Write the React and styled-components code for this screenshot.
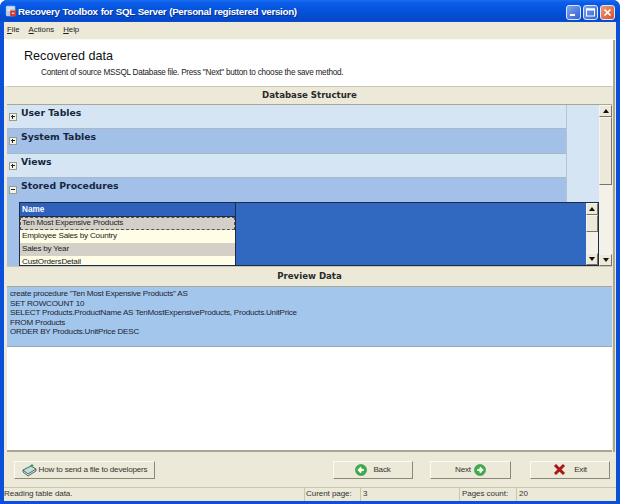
import React from 'react';
import styled, { createGlobalStyle } from 'styled-components';

const Global = createGlobalStyle`
  html, body { margin: 0; padding: 0; background: #fff; }
  body { font-family: "Liberation Sans", Arial, sans-serif; font-size: 8px; color: #222; }
`
const Win = styled.div`
  width: 620px;
  height: 504px;
  box-sizing: border-box;
  display: flex;
  flex-direction: column;
  background: #0a50d8;
  border-radius: 7px 7px 0 0;
  overflow: hidden;
`
const TitleBar = styled.div`
  height: 22px;
  flex: none;
  display: flex;
  align-items: center;
  padding: 0 5px 0 5px;
  background: linear-gradient(#1a6cf0 0, #0a5ce8 3px, #0553dc 10px, #0448c8 20px, #0a50d8 22px);
`
const TitleIcon = styled.svg`
  width: 12px;
  height: 12px;
  margin-right: 1px;
  flex: none;
`
const TitleText = styled.div`
  flex: 1;
  color: #fff;
  font-family: "Liberation Sans", sans-serif;
  font-weight: 700;
  font-size: 9.8px;
  letter-spacing: -0.31px;
  word-spacing: 0.5px;
  white-space: nowrap;
  text-shadow: 1px 1px 0 #0a2f90;
`
const WinBtn = styled.div`
  width: 15px;
  height: 15px;
  box-sizing: border-box;
  margin: 2px 0 0 2px;
  border: 1px solid #dfe8fa;
  border-radius: 3px;
  background: ${p => p.$close ? 'linear-gradient(135deg,#ee9a7a,#d8502a)' : 'linear-gradient(135deg,#7ea4ee,#2f62d8)'};
  display: flex;
  align-items: center;
  justify-content: center;
`
const Client = styled.div`
  flex: 1;
  min-height: 0;
  margin: 0 4px 3px 4px;
  background: #ece9d8;
  display: flex;
  flex-direction: column;
`
const MenuBar = styled.div`
  height: 14px;
  flex: none;
  display: flex;
  gap: 9px;
  align-items: center;
  padding: 0 3px;
  font-size: 7.8px;
  u { text-decoration: underline; }
`
const Sep = styled.div`
  height: 4px;
  flex: none;
  border-bottom: 1px solid #fbfaf5;
  box-sizing: border-box;
`
const Body = styled.div`
  flex: none;
  display: flex;
  flex-direction: column;
  margin-right: 1px;
  border-right: 2px solid #a9a695;
`
const Head = styled.div`
  height: 46px;
  flex: none;
  background: #fff;
  padding: 9px 0 0 20px;
  box-sizing: border-box;
`
const HeadTitle = styled.div`
  font-size: 12.6px;
  color: #111;
  line-height: 15px;
`
const HeadSub = styled.div`
  margin: 3px 0 0 17px;
  font-size: 8.2px;
  letter-spacing: -0.25px;
  line-height: 11px;
`
const Caption = styled.div`
  height: ${p => p.$h}px;
  flex: none;
  box-sizing: border-box;
  margin: 0 1px 0 3px;
  padding-bottom: ${p => p.$pb}px;
  display: flex;
  align-items: center;
  justify-content: center;
  font-family: "DejaVu Sans", sans-serif;
  font-weight: 700;
  font-size: 8.6px;
  color: #2a2a2a;
  background: #ece9d8;
  border-top: 1px solid #c9c6b4;
  border-bottom: 1px solid #a9a695;
`
const Tree = styled.div`
  height: 161px;
  flex: none;
  margin: 0 1px 0 3px;
  display: flex;
  background: #f4f2e8;
  overflow: hidden;
`
const TreeMain = styled.div`
  flex: 1;
  min-width: 0;
  display: flex;
  flex-direction: column;
`
const TopRows = styled.div`
  display: flex;
  background: #d5e5f3;
`
const RowList = styled.div`
  width: 559px;
  flex: none;
  border-right: 1px solid #b4c4d4;
`
const Row = styled.div`
  height: ${p => p.$h}px;
  box-sizing: border-box;
  background: ${p => p.$dark ? '#a3c1e8' : '#d5e5f3'};
  border-bottom: 1px solid #a9b8c8;
  display: flex;
  padding-left: 2px;
`
const Toggle = styled.div`
  width: 8px;
  height: 8px;
  margin: 8px 4px 0 0;
  flex: none;
  box-sizing: border-box;
  border: 1px solid #9a9a8c;
  background: #f4f2e4;
  position: relative;
  &::before {
    content: '';
    position: absolute;
    left: 1px;
    top: 2px;
    width: 4px;
    height: 1px;
    background: #222;
  }
  ${p => p.$plus ? `&::after {
    content: '';
    position: absolute;
    left: 2px;
    top: 1px;
    width: 1px;
    height: 4px;
    background: #222;
  }` : ''}
`
const RowLabel = styled.div`
  font-family: "DejaVu Sans", sans-serif;
  font-weight: 700;
  font-size: 9.3px;
  line-height: 11px;
  margin-top: 2px;
  color: #16263c;
`
const Stored = styled.div`
  flex: 1;
  min-height: 0;
  display: flex;
  flex-direction: column;
`
const StoredTop = styled.div`
  display: flex;
  height: 24px;
  flex: none;
  background: #d5e5f3;
`
const StoredLabel = styled(Row)`
  width: 560px;
  flex: none;
  border-bottom: none;
  border-right: 1px solid #b4c4d4;
`
const StoredBody = styled.div`
  flex: 1;
  min-height: 0;
  background: #a3c1e8;
  padding-left: 12px;
  display: flex;
`
const Sub = styled.div`
  flex: 1;
  display: flex;
  background: #3168c0;
  border: 1px solid #1c2c48;
  min-width: 0;
`
const Grid = styled.div`
  width: 215px;
  flex: none;
  overflow: hidden;
  border-right: 1px solid #1c2c48;
`
const GridHead = styled.div`
  height: 14px;
  box-sizing: border-box;
  background: #2f62bc;
  color: #fff;
  font-weight: 700;
  font-size: 8.2px;
  line-height: 13px;
  padding-left: 2px;
  border-bottom: 1px solid #1c2c48;
`
const GridRow = styled.div`
  height: 13px;
  box-sizing: border-box;
  background: ${p => p.$alt ? '#d4d0c8' : '#fffde6'};
  font-size: 8.1px;
  letter-spacing: -0.2px;
  line-height: 12px;
  padding-left: 2px;
  white-space: nowrap;
  ${p => p.$current ? 'outline: 1px dashed #555; outline-offset: -1px;' : ''}
`
const SubFill = styled.div`
  flex: 1;
`
const ScrollBar = styled.div`
  width: ${p => p.$w}px;
  flex: none;
  display: flex;
  flex-direction: column;
  background: #f4f2e8;
`
const ScrollBtn = styled.div`
  height: ${p => p.$h}px;
  flex: none;
  box-sizing: border-box;
  background: #ece9d8;
  border: 1px solid;
  border-color: #f6f5ec #77756a #77756a #f6f5ec;
  display: flex;
  align-items: center;
  justify-content: center;
  &::after {
    content: '';
    border-left: 3.5px solid transparent;
    border-right: 3.5px solid transparent;
    ${p => p.$down ? 'border-top: 4px solid #111;' : 'border-bottom: 4px solid #111;'}
  }
`
const Thumb = styled.div`
  height: ${p => p.$h}px;
  flex: none;
  box-sizing: border-box;
  background: #ece9d8;
  border: 1px solid;
  border-color: #f6f5ec #77756a #77756a #f6f5ec;
`
const Track = styled.div`
  flex: 1;
`
const Preview = styled.div`
  height: 165px;
  flex: none;
  margin: 0 1px 0 3px;
  background: #fff;
  border-bottom: 2px solid #a9a695;
  display: flex;
  flex-direction: column;
  box-sizing: border-box;
`
const Code = styled.div`
  height: 60px;
  flex: none;
  box-sizing: border-box;
  background: #a3c6ec;
  border-bottom: 1px solid #9aa8b8;
  padding: 2px 0 0 3px;
  font-size: 8.1px;
  letter-spacing: -0.22px;
  line-height: 9.5px;
  color: #1c2430;
  white-space: pre;
`
const Actions = styled.div`
  flex: 1;
  min-height: 0;
  display: flex;
  align-items: center;
  padding: 0 6px 0 10px;
`
const Btn = styled.div`
  width: ${p => p.$w}px;
  height: 18px;
  margin-right: ${p => p.$mr || 0}px;
  box-sizing: border-box;
  background: #ece9d8;
  border: 1px solid;
  border-color: #fbfaf4 #8a887a #8a887a #fbfaf4;
  display: flex;
  align-items: center;
  justify-content: center;
  gap: ${p => p.$gap || 4}px;
  font-size: 8.1px;
  letter-spacing: -0.2px;
  white-space: nowrap;
  color: #333;
`
const Spacer = styled.div`
  flex: 1;
`
const Status = styled.div`
  height: 13px;
  flex: none;
  display: grid;
  grid-template-columns: 301px 56px 99px 57px 1fr;
  border-top: 1px solid #c9c6b4;
  font-size: 8px;
  letter-spacing: -0.05px;
  line-height: 12px;
  color: #333;
`
const Cell = styled.div`
  padding-left: ${p => p.$pad}px;
  white-space: nowrap;
  border-right: ${p => p.$edge ? '1px solid #c9c6b4' : 'none'};
`

const GreenArrow = ({ flip }) => (
  <svg width="12" height="12" viewBox="0 0 13 13">
    <circle cx="6.5" cy="6.5" r="6" fill="#3fae4a" stroke="#2a8a36" strokeWidth="0.6" />
    <path
      d={flip ? 'M9.5 6.5H4.5M6.8 3.8L4 6.5L6.8 9.2' : 'M3.5 6.5H8.5M6.2 3.8L9 6.5L6.2 9.2'}
      fill="none"
      stroke="#fff"
      strokeWidth="2"
    />
  </svg>
)

export default function App() {
  return (
    <Win>
      <Global />
      <TitleBar>
        <TitleIcon viewBox="0 0 14 14">
          <rect x="1" y="1" width="11" height="12" rx="1.5" fill="#b4cbe8" />
          <path d="M2.5 3.5H10.5M2.5 6H6" stroke="#f2f5fa" strokeWidth="1.4" />
          <rect x="6" y="6.5" width="7" height="6.5" fill="#d83a30" />
          <path d="M8 9.7H11" stroke="#fff" strokeWidth="1.2" />
        </TitleIcon>
        <TitleText>Recovery Toolbox for SQL Server (Personal registered version)</TitleText>
        <WinBtn>
          <svg width="11" height="11" viewBox="0 0 11 11"><rect x="2" y="7" width="5" height="2" fill="#fff" /></svg>
        </WinBtn>
        <WinBtn>
          <svg width="11" height="11" viewBox="0 0 11 11"><rect x="1.5" y="2" width="8" height="7" fill="none" stroke="#fff" strokeWidth="1" /><rect x="1" y="1.5" width="9" height="2" fill="#fff" /></svg>
        </WinBtn>
        <WinBtn $close>
          <svg width="11" height="11" viewBox="0 0 11 11"><path d="M2.5 2.5L8.5 8.5M8.5 2.5L2.5 8.5" stroke="#fff" strokeWidth="1.7" /></svg>
        </WinBtn>
      </TitleBar>
      <Client>
        <MenuBar>
          <span><u>F</u>ile</span>
          <span><u>A</u>ctions</span>
          <span><u>H</u>elp</span>
        </MenuBar>
        <Sep />
        <Body>
          <Head>
            <HeadTitle>Recovered data</HeadTitle>
            <HeadSub>Content of source MSSQL Database file. Press "Next" button to choose the save method.</HeadSub>
          </Head>
          <Caption $h={19} $pb={2}>Database Structure</Caption>
          <Tree>
            <TreeMain>
              <TopRows>
                <RowList>
                  <Row $h={24}><Toggle $plus /><RowLabel>User Tables</RowLabel></Row>
                  <Row $h={25} $dark><Toggle $plus /><RowLabel>System Tables</RowLabel></Row>
                  <Row $h={24}><Toggle $plus /><RowLabel>Views</RowLabel></Row>
                </RowList>
              </TopRows>
              <Stored>
                <StoredTop>
                  <StoredLabel $h={24} $dark><Toggle /><RowLabel>Stored Procedures</RowLabel></StoredLabel>
                </StoredTop>
                <StoredBody>
                  <Sub>
                    <Grid>
                      <GridHead>Name</GridHead>
                      <GridRow $alt $current>Ten Most Expensive Products</GridRow>
                      <GridRow>Employee Sales by Country</GridRow>
                      <GridRow $alt>Sales by Year</GridRow>
                      <GridRow>CustOrdersDetail</GridRow>
                    </Grid>
                    <SubFill />
                    <ScrollBar $w={12}>
                      <ScrollBtn $h={12} />
                      <Thumb $h={17} />
                      <Track />
                      <ScrollBtn $h={12} $down />
                    </ScrollBar>
                  </Sub>
                </StoredBody>
              </Stored>
            </TreeMain>
            <ScrollBar $w={13}>
              <ScrollBtn $h={12} />
              <Thumb $h={68} />
              <Track />
              <ScrollBtn $h={12} $down />
            </ScrollBar>
          </Tree>
          <Caption $h={21} $pb={2}>Preview Data</Caption>
          <Preview>
            <Code>{`create procedure "Ten Most Expensive Products" AS
SET ROWCOUNT 10
SELECT Products.ProductName AS TenMostExpensiveProducts, Products.UnitPrice
FROM Products
ORDER BY Products.UnitPrice DESC`}</Code>
          </Preview>
        </Body>
        <Actions>
          <Btn $w={141} $gap={2}>
            <svg width="15" height="14" viewBox="0 0 15 14">
              <path d="M1 7L9 3L14 6L6 11Z" fill="#bfe0dc" stroke="#2c5a5a" strokeWidth="0.9" />
              <path d="M1 7V9L6 13L14 8V6" fill="none" stroke="#2c5a5a" strokeWidth="0.9" />
              <path d="M10 4V1M8.5 2.5H11.5" stroke="#3a9a5a" strokeWidth="1" />
            </svg>
            How to send a file to developers
          </Btn>
          <Spacer />
          <Btn $w={80} $mr={17} $gap={6}><GreenArrow flip />Back</Btn>
          <Btn $w={81} $mr={19} $gap={3}>Next<GreenArrow /></Btn>
          <Btn $w={80} $gap={8}>
            <svg width="13" height="13" viewBox="0 0 13 13">
              <path d="M2 2L11 11M11 2L2 11" stroke="#a81818" strokeWidth="3" />
            </svg>
            Exit
          </Btn>
        </Actions>
        <Status>
          <Cell $edge $pad={0}>Reading table data.</Cell>
          <Cell $edge $pad={1}>Curent page:</Cell>
          <Cell $edge $pad={2}>3</Cell>
          <Cell $edge $pad={2}>Pages count:</Cell>
          <Cell $pad={2}>20</Cell>
        </Status>
      </Client>
    </Win>
  )
}
